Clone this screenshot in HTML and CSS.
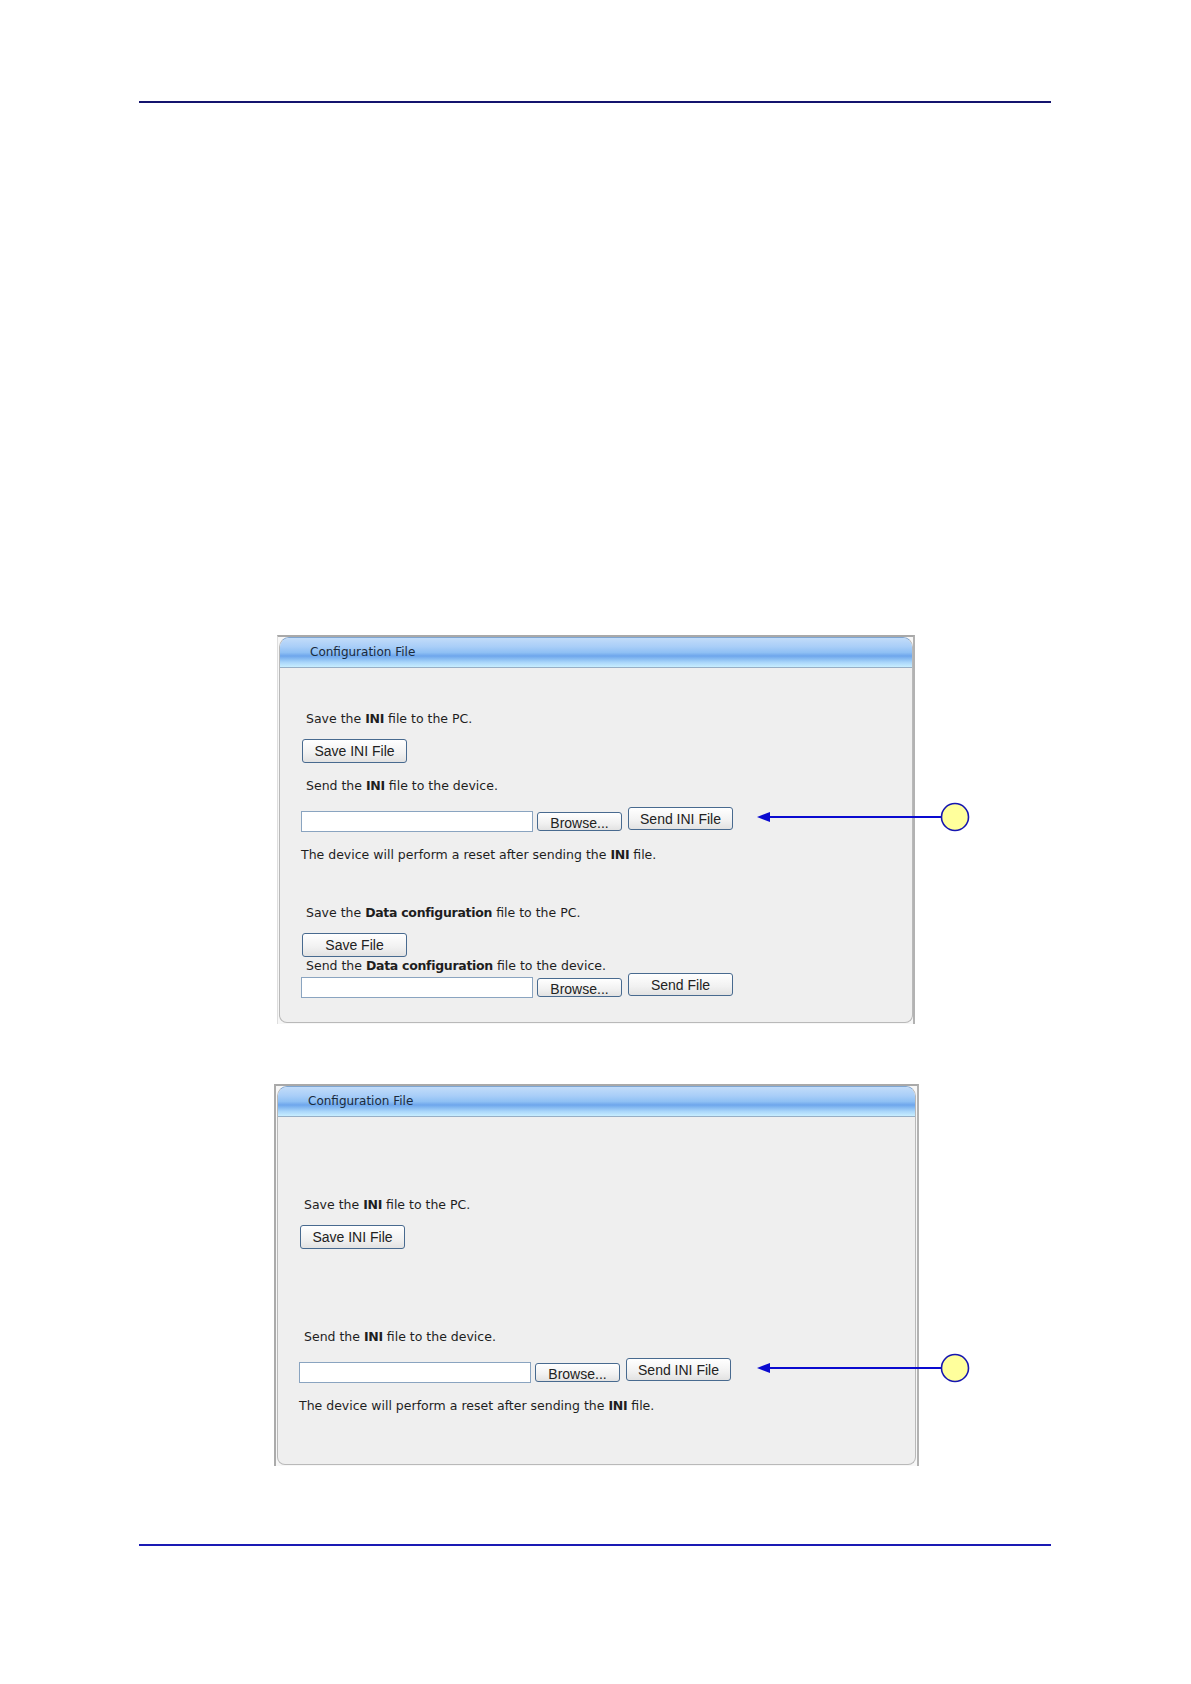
FILE: index.html
```html
<!DOCTYPE html>
<html lang="en">
<head>
  <meta charset="UTF-8" />
  <title>Configuration File</title>
  <link rel="stylesheet" href="styles.css">
</head>
<body>

<div class="rule"></div>

<div class="figure fig-one">
  <div class="shot">
    <div class="panel">
      <div class="panel-head">Configuration File</div>
      <div class="panel-body">
        <p class="note gap">Save the <b>INI</b> file to the PC.</p>
        <div class="btn-line"><button class="btn">Save INI File</button></div>
        <p class="note">Send the <b>INI</b> file to the device.</p>
        <div class="file-row">
          <input class="file" type="text" />
          <button class="btn browse">Browse...</button>
          <button class="btn send">Send INI File</button>
        </div>
        <p class="note plain">The device will perform a reset after sending the <b>INI</b> file.</p>

        <p class="note gap">Save the <b>Data configuration</b> file to the PC.</p>
        <div class="btn-line"><button class="btn">Save File</button></div>
        <p class="note flush">Send the <b>Data configuration</b> file to the device.</p>
        <div class="file-row flush">
          <input class="file" type="text" />
          <button class="btn browse">Browse...</button>
          <button class="btn send">Send File</button>
        </div>
      </div>
    </div>
  </div>
  <svg class="callout" width="216" height="32" viewBox="0 0 216 32">
    <line x1="12" y1="16" x2="184" y2="16" stroke="#0a0ad0" stroke-width="2" />
    <polygon points="0,16 13,11 13,21" fill="#0a0ad0" />
    <circle cx="198" cy="16" r="13.5" fill="#ffff9c" stroke="#1616b0" stroke-width="1.6" />
  </svg>
</div>

<div class="figure fig-two">
  <div class="shot">
    <div class="panel">
      <div class="panel-head">Configuration File</div>
      <div class="panel-body tall">
        <p class="note wide">Save the <b>INI</b> file to the PC.</p>
        <div class="btn-line"><button class="btn">Save INI File</button></div>
        <p class="note wide">Send the <b>INI</b> file to the device.</p>
        <div class="file-row">
          <input class="file" type="text" />
          <button class="btn browse">Browse...</button>
          <button class="btn send">Send INI File</button>
        </div>
        <p class="note plain">The device will perform a reset after sending the <b>INI</b> file.</p>
      </div>
    </div>
  </div>
  <svg class="callout" width="216" height="32" viewBox="0 0 216 32">
    <line x1="12" y1="16" x2="184" y2="16" stroke="#0a0ad0" stroke-width="2" />
    <polygon points="0,16 13,11 13,21" fill="#0a0ad0" />
    <circle cx="198" cy="16" r="13.5" fill="#ffff9c" stroke="#1616b0" stroke-width="1.6" />
  </svg>
</div>

<div class="rule bottom"></div>

</body>
</html>
```

FILE: styles.css
```css
body {
  margin: 0;
  padding-top: 101px;
  background: #fff;
  font-family: "DejaVu Sans", Verdana, sans-serif;
  color: #1e1e1e;
}
.rule {
  width: 912px;
  margin-left: 139px;
  border-top: 2px solid #14146e;
}
.rule.bottom {
  margin-top: 78px;
  border-top-color: #1a1ab4;
}

.figure {
  position: relative;
}
.fig-one {
  width: 638px;
  margin: 532px 0 0 277px;
}
.fig-two {
  width: 645px;
  margin: 60px 0 0 274px;
}
.callout {
  position: absolute;
  display: block;
}
.fig-one .callout {
  left: 480px;
  top: 166px;
}
.fig-two .callout {
  left: 483px;
  top: 268px;
}

.shot {
  box-sizing: border-box;
  background: #f7f7f7;
  border-top: 2px solid #a9a9a9;
  border-left: 1px solid #dedede;
  border-right: 2px solid #b2b2b2;
  padding: 0 0 1px 1px;
}
.fig-two .shot {
  border-left: 2px solid #ababab;
  padding: 0 1px 1px 1px;
}

.panel {
  background: #efefef;
  border: 1px solid #b9b9b9;
  border-top-color: #7fa6d2;
  border-radius: 10px 10px 8px 8px;
  overflow: hidden;
}
.panel-head {
  height: 29px;
  line-height: 29px;
  padding-left: 30px;
  font-size: 12px;
  color: #1a2a3c;
  border-bottom: 1px solid #97afc6;
  background: linear-gradient(to bottom, #c2dcf9 0%, #a9cef8 30%, #8fc0f4 50%, #6ea6ec 62%, #88bcf2 72%, #aad6fa 84%, #c8eeff 100%);
}
.panel-body {
  padding: 0 0 24px 21px;
}
.panel-body.tall {
  padding-bottom: 51px;
}

.note {
  margin: 16px 0 0 5px;
  font-size: 12.5px;
  line-height: 14px;
  white-space: nowrap;
}
.note.gap {
  margin-top: 44px;
}
.note.wide {
  margin-top: 81px;
}
.note.flush {
  margin-top: 2px;
}
.note.plain {
  margin-left: 0;
}
.note b {
  letter-spacing: -0.3px;
}

.btn-line {
  margin-top: 13px;
  height: 24px;
}
.btn {
  box-sizing: border-box;
  width: 105px;
  height: 24px;
  margin: 0 0 0 1px;
  padding: 0;
  font-family: "Liberation Sans", Arial, sans-serif;
  font-size: 14px;
  color: #222;
  background: linear-gradient(to bottom, #ffffff, #f1f1f1 60%, #e2e2e2);
  border: 1px solid #486a8f;
  border-radius: 3px;
}

.file-row {
  display: flex;
  align-items: flex-start;
  margin-top: 14px;
  height: 25px;
}
.file-row.flush {
  margin-top: 0;
}
.file {
  box-sizing: border-box;
  width: 232px;
  height: 21px;
  margin: 4px 0 0 0;
  padding: 0 3px;
  background: #fff;
  border: 1px solid #8aa4c0;
}
.btn.browse {
  width: 85px;
  height: 19px;
  margin: 5px 0 0 4px;
  line-height: 17px;
  padding-top: 2px;
}
.btn.send {
  width: 105px;
  height: 23px;
  margin-left: 6px;
}
```
